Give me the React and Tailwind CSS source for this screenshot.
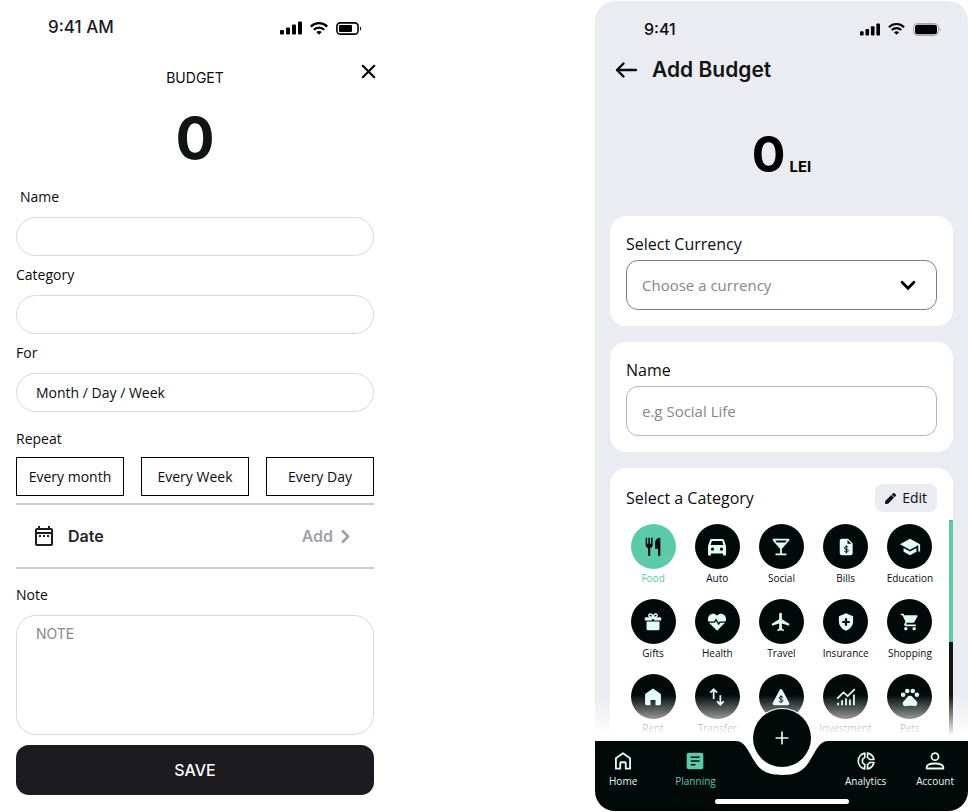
import React from "react";
import {
  MdFlight,
  MdLocalBar,
  MdOutlineDateRange,
  MdPets,
  MdSchool,
  MdShoppingCart,
} from "react-icons/md";
import { FaPen } from "react-icons/fa";
import { ChevronRight, Plus, X } from "lucide-react";

const body = "font-['Open_Sans',sans-serif]";
const inter = "font-['Inter',sans-serif]";

function Signal({ className }) {
  return (
    <svg viewBox="0 0 22 14" className={className} fill="currentColor" aria-hidden="true">
      <rect x="0" y="9" width="4" height="4.500" rx="1" />
      <rect x="6" y="6.500" width="4" height="7" rx="1" />
      <rect x="12" y="3.500" width="4" height="10" rx="1" />
      <rect x="18" y="0.500" width="4" height="13" rx="1" />
    </svg>
  );
}

function Wifi({ className }) {
  return (
    <svg viewBox="0 0 18 13" className={className} aria-hidden="true">
      <g fill="none" stroke="currentColor" strokeWidth="2.300">
        <path d="M0.800 4.600C5.400 0 12.600 0 17.200 4.600" />
        <path d="M3.800 7.700C6.700 4.800 11.300 4.800 14.200 7.700" />
      </g>
      <path d="M6.200 10C7.800 8.600 10.200 8.600 11.800 10L9 12.800Z" fill="currentColor" />
    </svg>
  );
}

function BatteryPartial() {
  return (
    <svg viewBox="0 0 26 13" className="h-[13px] w-[26px]" aria-hidden="true">
      <rect x="0.900" y="0.900" width="21.200" height="11.200" rx="3.400" fill="none" stroke="currentColor" strokeWidth="1.600" />
      <rect x="3" y="3" width="13" height="7" rx="1" fill="currentColor" />
      <path d="M24 4.400C25.600 5 25.600 8 24 8.600Z" fill="currentColor" />
    </svg>
  );
}

function BatteryFull() {
  return (
    <svg viewBox="0 0 28 13" className="h-[13px] w-[28px]" aria-hidden="true">
      <rect x="0.500" y="0.500" width="25" height="12" rx="3.800" fill="none" stroke="#a3a4a8" />
      <rect x="2" y="1.800" width="22" height="9.400" rx="2.500" fill="currentColor" />
      <path d="M26.600 4.400C28 5 28 8 26.600 8.600Z" fill="#a3a4a8" />
    </svg>
  );
}

function Glyph({ children, size = "size-5" }) {
  return (
    <svg viewBox="0 0 24 24" className={size} fill="currentColor" aria-hidden="true">
      {children}
    </svg>
  );
}

const FoodIcon = () => (
  <Glyph size="size-[22px]">
    <path d="M4 2h1.600v6.500h1.300V2h1.700v6.500h1.300V2h1.700v7.500c0 1.900-1.100 3.200-2.600 3.700V21.500H6.600v-8.300C5.100 12.700 4 11.400 4 9.500Z" />
    <path d="M20 2v19.500h-2.500V14h-3.200V7.500C14.300 4.500 16.500 2 20 2Z" />
  </Glyph>
);

const CarIcon = () => (
  <Glyph size="size-6">
    <path
      fillRule="evenodd"
      d="M18.900 5C18.700 4.400 18.200 4 17.500 4h-11C5.800 4 5.300 4.400 5.100 5L3 11v8.500c0 .6.400 1 1 1h1c.6 0 1-.4 1-1V18.500h12v1c0 .6.400 1 1 1h1c.6 0 1-.4 1-1V11ZM5.600 10 6.900 6h10.200l1.300 4ZM7.500 12.600a1.600 1.600 0 1 0 .01 0ZM16.500 12.600a1.600 1.600 0 1 0 .01 0Z"
    />
  </Glyph>
);

const BillIcon = () => (
  <Glyph>
    <path
      fillRule="evenodd"
      d="M4.500 4.500A2.500 2.500 0 0 1 7 2h7.500l5.500 5.500v12a2.500 2.500 0 0 1-2.500 2.500H7a2.500 2.500 0 0 1-2.500-2.500ZM13.800 3.600V8.200h4.600Z"
    />
    <path
      d="M14.600 12.600c-.4-.8-1.200-1.100-2.300-1.100-1.300 0-2.200.6-2.200 1.600 0 2.300 4.600 1 4.600 3.300 0 1-.9 1.600-2.300 1.600-1.200 0-2.100-.4-2.500-1.200M12.400 10v9.500"
      fill="none"
      stroke="#010a08"
      strokeWidth="1.200"
    />
  </Glyph>
);

const GiftIcon = () => (
  <Glyph>
    <path d="M4.200 11.300h15.600V20a2 2 0 0 1-2 2H6.200a2 2 0 0 1-2-2Z" />
    <path d="M3 6.200h18a.8.8 0 0 1 .8.800v3.300H13.500V8.800h-3v1.500H2.200V7A.8.8 0 0 1 3 6.200Z" />
    <path
      d="M12 6.200C7.500 6.500 6.500 5 7 3.600 7.600 1.800 10.800 1.400 12 5.800 13.200 1.400 16.400 1.800 17 3.600 17.500 5 16.500 6.500 12 6.200Z"
      fill="none"
      stroke="currentColor"
      strokeWidth="1.700"
    />
  </Glyph>
);

const HealthIcon = () => (
  <Glyph size="size-[22px]">
    <path d="M12 21.500 3.800 13.400C1.500 11 1.500 7 3.600 4.800 6 2.300 9.800 2.600 12 5.200 14.200 2.600 18 2.300 20.400 4.800 22.500 7 22.500 11 20.200 13.400Z" />
    <path d="M1 12.200h8.300l1.700-2.700 2.800 4.700 1.500-2H23" fill="none" stroke="#010a08" strokeWidth="1.500" />
  </Glyph>
);

const ShieldIcon = () => (
  <Glyph>
    <path
      fillRule="evenodd"
      d="M12 1.500 20.500 5v6.500c0 5.200-3.600 9-8.500 11-4.900-2-8.500-5.800-8.500-11V5ZM10.700 7.500v3.200H7.500v2.600h3.200v3.200h2.600v-3.200h3.200v-2.600h-3.200V7.500Z"
    />
  </Glyph>
);

const RentIcon = () => (
  <Glyph>
    <path d="M12 1.800 21.500 8.400V20a2 2 0 0 1-2 2H15v-6.500H9V22H4.500a2 2 0 0 1-2-2V8.400Z" />
  </Glyph>
);

const TransferIcon = () => (
  <Glyph>
    <path
      d="M8 14.500V3M4 6.800 8 2.800l4 4M16 10v11M12 17.200l4 4 4-4"
      fill="none"
      stroke="currentColor"
      strokeWidth="2.100"
    />
  </Glyph>
);

const TriangleIcon = () => (
  <Glyph>
    <path d="M10.500 3.200a1.700 1.700 0 0 1 3 0L21.800 19a2 2 0 0 1-1.800 3H4a2 2 0 0 1-1.800-3Z" />
    <path
      d="M14.300 12.600c-.4-.8-1.200-1.100-2.300-1.100-1.300 0-2.200.6-2.200 1.600 0 2.300 4.600 1 4.600 3.300 0 1-.9 1.600-2.300 1.600-1.200 0-2.100-.4-2.500-1.200M12 10v9.500"
      fill="none"
      stroke="#010a08"
      strokeWidth="1.200"
    />
  </Glyph>
);

const InvestIcon = () => (
  <Glyph>
    <path
      d="M1.500 14 9 6.500l5 4.500L22.500 2.500M2.500 19v3M7.300 16v6M12 13.500V22M16.700 15v7M21.500 9v13"
      fill="none"
      stroke="currentColor"
      strokeWidth="2.100"
    />
  </Glyph>
);

const HomeIcon = () => (
  <Glyph>
    <path
      d="M12 2.600 20.500 8.800v12.400h-5.200v-6.700a1 1 0 0 0-1-1H9.700a1 1 0 0 0-1 1v6.700H3.500V8.800Z"
      fill="none"
      stroke="currentColor"
      strokeWidth="2.200"
      strokeLinejoin="round"
    />
  </Glyph>
);

const PlanIcon = () => (
  <Glyph>
    <rect x="2" y="2" width="20" height="20" rx="2.500" />
    <path d="M7 7.500h10.500M7 12h10.500M7 16.500h5.500" stroke="#010a08" strokeWidth="2" />
  </Glyph>
);

const AnalyticsIcon = () => (
  <Glyph>
    <g fill="none" stroke="currentColor" strokeWidth="2" strokeLinejoin="round">
      <path d="M10.500 2.500a9.700 9.700 0 0 0 0 19v-5.300a4.500 4.500 0 0 1 0-8.400Z" />
      <path d="M13.800 2.500a9.700 9.700 0 0 1 7.700 7.700h-5.300a4.500 4.500 0 0 0-2.400-2.400Z" />
      <path d="M13.800 21.500a9.700 9.700 0 0 0 7.700-7.700h-5.300a4.500 4.500 0 0 1-2.400 2.400Z" />
    </g>
  </Glyph>
);

const AccountIcon = () => (
  <Glyph>
    <g fill="none" stroke="currentColor" strokeWidth="2.200">
      <circle cx="12" cy="6.800" r="4.200" />
      <path d="M2 21v-1.500c0-3 5-4.500 10-4.500s10 1.500 10 4.500V21Z" strokeLinejoin="round" />
    </g>
  </Glyph>
);

const categories = [
  { name: "Food", icon: <FoodIcon />, active: true },
  { name: "Auto", icon: <CarIcon /> },
  { name: "Social", icon: <MdLocalBar className="size-[22px]" /> },
  { name: "Bills", icon: <BillIcon /> },
  { name: "Education", icon: <MdSchool className="size-[22px]" /> },
  { name: "Gifts", icon: <GiftIcon /> },
  { name: "Health", icon: <HealthIcon /> },
  { name: "Travel", icon: <MdFlight className="size-[22px]" /> },
  { name: "Insurance", icon: <ShieldIcon /> },
  { name: "Shopping", icon: <MdShoppingCart className="size-5" /> },
  { name: "Rent", icon: <RentIcon /> },
  { name: "Transfer", icon: <TransferIcon /> },
  { name: "Savings", icon: <TriangleIcon /> },
  { name: "Investment", icon: <InvestIcon /> },
  { name: "Pets", icon: <MdPets className="size-[22px]" /> },
];

function PillField({ id, label, value = "", indent = false }) {
  return (
    <>
      <label htmlFor={id} className={indent ? "mb-2.5 pl-1 leading-5" : "mt-[9px] mb-2.5 leading-5"}>
        {label}
      </label>
      <input
        id={id}
        defaultValue={value}
        className="h-[39px] w-full rounded-full border border-[#d9d9d9] bg-white px-[19px] outline-none"
      />
    </>
  );
}

function SimpleScreen() {
  return (
    <section className={`flex w-full max-w-[390px] flex-col px-4 pb-4 text-sm font-medium text-[#0b0b0d] ${body}`}>
      <header className={`flex items-center justify-between pt-[15px] pr-3 pl-8 ${inter}`}>
        <span className="text-[17px] leading-6 font-medium text-[#1c1b20]">9:41 AM</span>
        <span className="flex items-center gap-2 pt-0.5 text-black">
          <Signal className="h-3.5 w-[22px]" />
          <Wifi className="h-[13px] w-[18px]" />
          <BatteryPartial />
        </span>
      </header>
      <div className="mt-[21px] grid grid-cols-[1fr_auto_1fr] items-start">
        <h1 className={`col-start-2 mt-2 leading-5 font-normal ${inter}`}>BUDGET</h1>
        <button type="button" aria-label="Close" className="-mr-1.5 justify-self-end text-black">
          <X className="size-[23px]" strokeWidth={2.2} />
        </button>
      </div>
      <output className={`mt-5 text-center text-[58px] leading-[60px] font-bold text-[#111412] ${inter}`}>0</output>
      <div className="mt-[19px] flex flex-col">
        <PillField id="s-name" label="Name" indent />
        <PillField id="s-category" label="Category" />
        <PillField id="s-for" label="For" value="Month / Day / Week" />
      </div>
      <h2 className="mt-[17px] leading-5">Repeat</h2>
      <div className="mt-2 grid grid-cols-3 gap-[17px]">
        {["Every month", "Every Week", "Every Day"].map((t) => (
          <button key={t} type="button" className="h-[39px] border border-black whitespace-nowrap">
            {t}
          </button>
        ))}
      </div>
      <div className={`mt-[7px] flex h-[66px] items-center border-y-2 border-[#cacad0] pr-[18px] pl-4 text-base font-semibold ${inter}`}>
        <MdOutlineDateRange className="size-6 text-[#1c1b20]" />
        <span className="ml-3 text-[#24242a]">Date</span>
        <button type="button" className="ml-auto flex items-center gap-0.5 text-[#a2a1ae]">
          Add
          <ChevronRight className="size-[21px]" strokeWidth={3} />
        </button>
      </div>
      <label htmlFor="s-note" className="mt-4 leading-5">
        Note
      </label>
      <textarea
        id="s-note"
        placeholder="NOTE"
        className={`mt-2.5 h-[120px] w-full resize-none rounded-[20px] border border-[#d9d9d9] px-[19px] py-2 font-normal outline-none placeholder:text-[#88888d] ${inter}`}
      />
      <button
        type="button"
        className={`mt-2.5 h-[50px] rounded-[13px] bg-[#1c1b20] text-base font-medium text-white ${inter}`}
      >
        SAVE
      </button>
    </section>
  );
}

function NavItem({ label, icon, active }) {
  return (
    <a
      href="#"
      className={
        active
          ? "flex flex-col items-center gap-0.5 text-[10px] leading-4 text-[#5cc9a9]"
          : "flex flex-col items-center gap-0.5 text-[10px] leading-4 text-[#e2fbf4]"
      }
    >
      {icon}
      {label}
    </a>
  );
}

function BottomNav() {
  return (
    <nav className="relative flex h-[70px] items-start justify-between bg-[#010a08] px-3.5 pt-2.5">
      <div className="flex gap-[38px]">
        <NavItem label="Home" icon={<HomeIcon />} />
        <NavItem label="Planning" icon={<PlanIcon />} active />
      </div>
      <div className="flex gap-[30px]">
        <NavItem label="Analytics" icon={<AnalyticsIcon />} />
        <NavItem label="Account" icon={<AccountIcon />} />
      </div>
      <svg
        viewBox="0 0 92 34"
        className="absolute top-0 left-1/2 h-[34px] w-[92px] -translate-x-1/2"
        aria-hidden="true"
      >
        <path d="M0 0C9 0 12.500 11 19 21S33 34 46 34 66.500 31 73 21 83 0 92 0Z" fill="#fff" />
      </svg>
      <button
        type="button"
        aria-label="Add"
        className="absolute -top-8 left-1/2 flex size-[58px] -translate-x-1/2 items-center justify-center rounded-full bg-[#010a08] text-[#e2fbf4] ring-1 ring-white"
      >
        <Plus className="size-5" strokeWidth={2} />
      </button>
      <span className="absolute bottom-[7px] left-1/2 h-[5px] w-[134px] -translate-x-1/2 rounded-full bg-white" />
    </nav>
  );
}

function DetailScreen() {
  return (
    <section
      className={`mt-px w-full max-w-[373px] overflow-hidden rounded-[20px] bg-[#ebecf2] text-base font-medium text-[#0b0b0d] ${body}`}
    >
      <div className="relative px-[15px]">
        <header className={`flex items-center justify-between pt-4 pr-3 pl-[34px] ${inter}`}>
          <span className="text-base leading-6 font-medium">9:41</span>
          <span className="flex items-center gap-2 text-black">
            <Signal className="h-[13px] w-5" />
            <Wifi className="h-3 w-[17px]" />
            <BatteryFull />
          </span>
        </header>
        <div className="mt-[13px] flex items-center gap-3 pl-0.5">
          <button type="button" aria-label="Back">
            <svg viewBox="0 0 28 28" className="size-7" fill="none" stroke="currentColor" strokeWidth="2.400" strokeLinecap="round" strokeLinejoin="round" aria-hidden="true">
              <path d="M24 14H5M11.500 7.500 5 14l6.500 6.500" />
            </svg>
          </button>
          <h1 className={`text-[21px] leading-8 font-semibold text-[#111412] ${inter}`}>Add Budget</h1>
        </div>
        <div className={`mt-[43px] flex items-baseline justify-center gap-1 text-black ${inter}`}>
          <output className="text-[50px] leading-[50px] font-bold">0</output>
          <span className="text-[15px] font-bold">LEI</span>
        </div>

        <div className="mt-[37px] rounded-2xl bg-white p-4">
          <label htmlFor="currency" className="mb-1 block h-6">
            Select Currency
          </label>
          <div className="relative">
            <select
              id="currency"
              className="h-[50px] w-full appearance-none rounded-xl border border-[#7d7f80] bg-white px-[15px] text-[15px] font-normal text-[#85868a] outline-none"
            >
              <option>Choose a currency</option>
            </select>
            <svg
              viewBox="0 0 24 24"
              className="pointer-events-none absolute top-3.5 right-[18px] size-[22px] text-black"
              fill="none"
              stroke="currentColor"
              strokeWidth="3"
              strokeLinecap="round"
              aria-hidden="true"
            >
              <path d="M5.500 9 12 15.500 18.500 9" />
            </svg>
          </div>
        </div>

        <div className="mt-4 rounded-2xl bg-white p-4">
          <label htmlFor="name" className="mb-1 block h-6">
            Name
          </label>
          <input
            id="name"
            placeholder="e.g Social Life"
            className="h-[50px] w-full rounded-xl border border-[#b4b5b8] bg-white px-[15px] text-[15px] font-normal outline-none placeholder:text-[#85868a]"
          />
        </div>

        <div className="relative mt-4 h-[273px] overflow-hidden rounded-t-2xl bg-white">
          <div className="flex items-center justify-between px-4 pt-4">
            <h2>Select a Category</h2>
            <button
              type="button"
              className="flex h-7 items-center gap-1.5 rounded-lg bg-[#ebecf2] px-2.5 text-sm font-medium"
            >
              <FaPen className="size-[11px]" />
              Edit
            </button>
          </div>
          <div className="mt-3 grid grid-cols-5 gap-y-3.5 px-[11px]">
            {categories.map((c) => (
              <button key={c.name} type="button" className="flex min-w-0 flex-col items-center gap-0.5">
                <span
                  className={
                    c.active
                      ? "flex size-[45px] items-center justify-center rounded-full bg-[#5cc9a9] text-[#010a08]"
                      : "flex size-[45px] items-center justify-center rounded-full bg-[#010a08] text-[#e2fbf4]"
                  }
                >
                  {c.icon}
                </span>
                <span className={c.active ? "text-[10px] leading-3.5 text-[#5cc9a9]" : "text-[10px] leading-3.5"}>
                  {c.name}
                </span>
              </button>
            ))}
          </div>
          <div className="absolute top-[52px] right-0 h-[215px] w-1 rounded-full bg-[#111412]">
            <div className="h-[122px] rounded-t-full bg-[#5cc9a9]" />
          </div>
        </div>
        <div className="pointer-events-none absolute inset-x-0 bottom-0 h-[46px] bg-linear-to-b from-white/0 to-white to-90%" />
      </div>
      <BottomNav />
    </section>
  );
}

export default function App() {
  return (
    <main className="flex min-h-screen items-start justify-between gap-4 bg-white pr-0.5">
      <SimpleScreen />
      <DetailScreen />
    </main>
  );
}
